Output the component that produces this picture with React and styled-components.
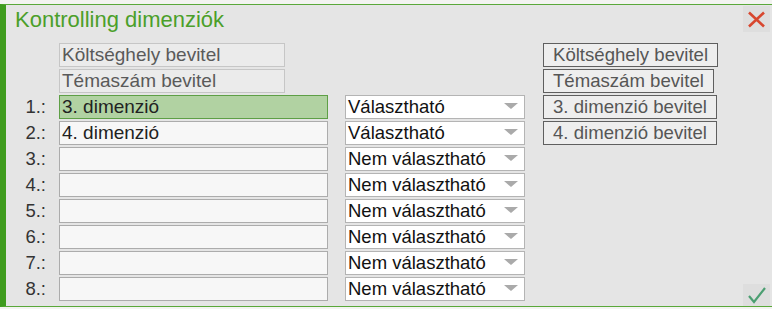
import React from 'react'
import styled, { createGlobalStyle } from 'styled-components'

const GlobalStyle = createGlobalStyle`
  html, body {
    margin: 0;
    padding: 0;
    background: #f3f4f1;
    font-family: "Liberation Sans", Arial, sans-serif;
  }
`

const Dialog = styled.div`
  margin-top: 4px;
  height: 301px;
  display: flex;
  background: #e5e5e5;
  border-top: 1px solid #5aa83a;
  border-bottom: 1px solid #5aa83a;
  border-left: 6px solid #3f9c1e;
  box-sizing: content-box;
`

const Main = styled.div`
  flex: 1;
  display: flex;
  flex-direction: column;
`

const Title = styled.h1`
  margin: 0;
  padding: 2px 0 0 9px;
  height: 36px;
  box-sizing: border-box;
  font-size: 22px;
  line-height: 26px;
  font-weight: normal;
  color: #4b9f2a;
`

// columns: label | field | select | button, widths include the gaps
const Grid = styled.div`
  display: grid;
  grid-template-columns: 53px 286px 198px auto;
  grid-auto-rows: 24px;
  row-gap: 2px;
  margin-top: 2px;
  justify-items: start;
`

const Label = styled.div`
  justify-self: end;
  padding-right: 13px;
  font-size: 18.5px;
  line-height: 24px;
  color: #333;
`

const Field = styled.div`
  height: 24px;
  box-sizing: border-box;
  padding: 0 2px;
  font-size: 19px;
  line-height: 22px;
  white-space: nowrap;
  color: ${p => (p.$muted ? '#5a5a5a' : '#222')};
  background: ${p => (p.$active ? '#b1d2a2' : p.$muted ? '#ebebeb' : '#f7f7f7')};
  border: 1px solid ${p => (p.$active ? '#5e9f46' : p.$muted ? '#c6c6c6' : '#acacac')};
  width: ${p => (p.$muted ? '226px' : '269px')};
`

const Select = styled.div`
  width: 180px;
  height: 24px;
  box-sizing: border-box;
  display: flex;
  align-items: center;
  justify-content: space-between;
  padding: 0 6px 0 2px;
  background: #fff;
  border: 1px solid #b4b4b4;
  font-size: 18.5px;
  color: #111;
  white-space: nowrap;
`

const Arrow = styled.span`
  width: 0;
  height: 0;
  margin-top: -3px;
  border-left: 7px solid transparent;
  border-right: 7px solid transparent;
  border-top: 6px solid #aaaaaa;
`

const Button = styled.button`
  height: 24px;
  box-sizing: border-box;
  padding: 0 9px;
  font-family: inherit;
  font-size: 18.6px;
  line-height: 22px;
  color: #565656;
  background: #eeeeee;
  border: 1px solid #5f5f5f;
  border-radius: 0;
  white-space: nowrap;
`

const Side = styled.div`
  width: 27px;
  margin-right: 2px;
  display: flex;
  flex-direction: column;
  justify-content: space-between;
  padding: 1px 0 0;
`

const IconButton = styled.div`
  width: 27px;
  height: ${p => p.$h || 26}px;
  display: flex;
  align-items: center;
  justify-content: center;
  background: #dedede;
`

const rows = [
  { n: 1, value: '3. dimenzió', active: true, sel: 'Választható', btn: '3. dimenzió bevitel' },
  { n: 2, value: '4. dimenzió', sel: 'Választható', btn: '4. dimenzió bevitel' },
  { n: 3, value: '', sel: 'Nem választható' },
  { n: 4, value: '', sel: 'Nem választható' },
  { n: 5, value: '', sel: 'Nem választható' },
  { n: 6, value: '', sel: 'Nem választható' },
  { n: 7, value: '', sel: 'Nem választható' },
  { n: 8, value: '', sel: 'Nem választható' },
]

const fixed = ['Költséghely bevitel', 'Témaszám bevitel']

export default function App() {
  return (
    <>
      <GlobalStyle />
      <Dialog>
        <Main>
          <Title>Kontrolling dimenziók</Title>
          <Grid>
            {fixed.map(t => (
              <React.Fragment key={t}>
                <Label />
                <Field $muted>{t}</Field>
                <span />
                <Button>{t}</Button>
              </React.Fragment>
            ))}
            {rows.map(r => (
              <React.Fragment key={r.n}>
                <Label>{r.n}.:</Label>
                <Field $active={r.active}>{r.value}</Field>
                <Select>
                  {r.sel}
                  <Arrow />
                </Select>
                {r.btn ? <Button>{r.btn}</Button> : <span />}
              </React.Fragment>
            ))}
          </Grid>
        </Main>
        <Side>
          <IconButton>
            <svg width="19" height="17" viewBox="0 0 19 17">
              <path d="M2 1.5 L17 15.5 M17 1.5 L2 15.5" stroke="#d8472f" strokeWidth="2.6" fill="none" />
            </svg>
          </IconButton>
          <IconButton $h={22}>
            <svg width="20" height="18" viewBox="0 0 20 18">
              <path d="M2 10 L7 16 L18 2" stroke="#4c9f72" strokeWidth="2.2" fill="none" />
            </svg>
          </IconButton>
        </Side>
      </Dialog>
    </>
  )
}
